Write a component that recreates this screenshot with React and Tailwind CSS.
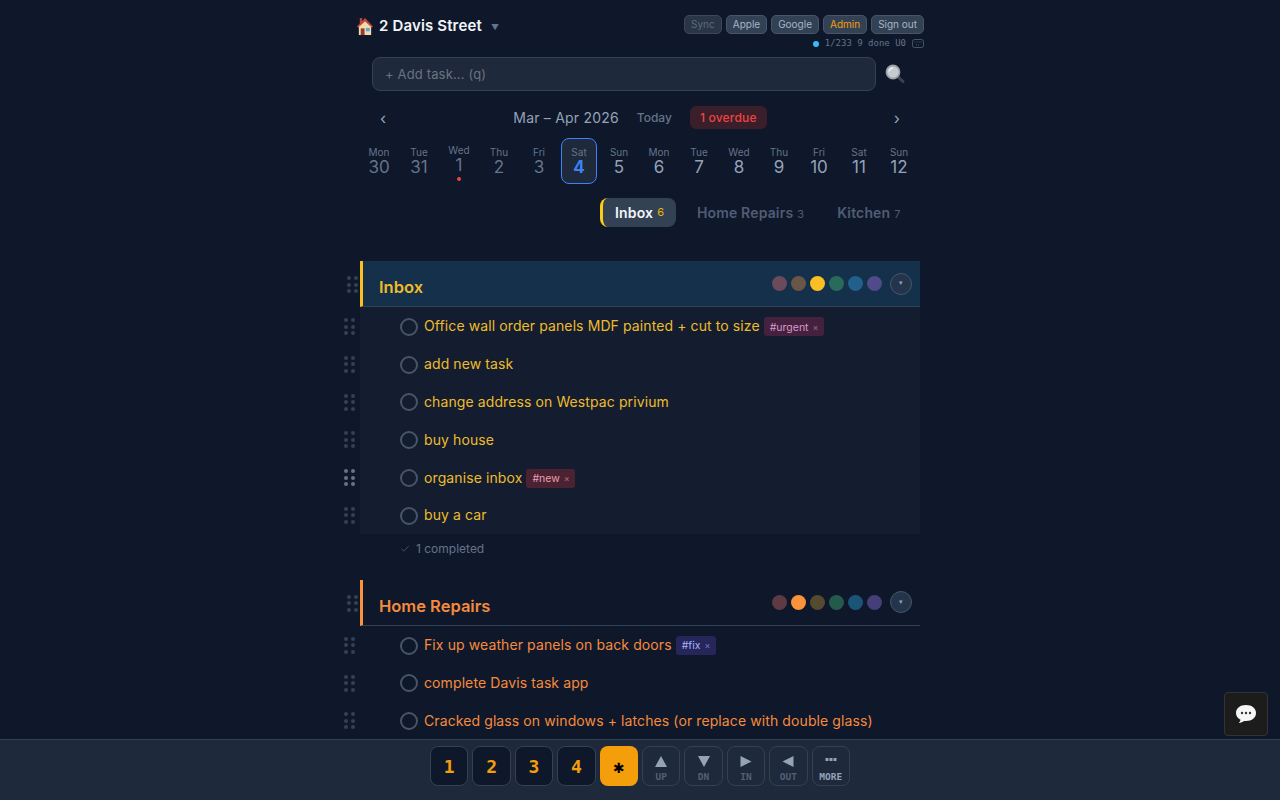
import { Check } from 'lucide-react';

const days = [
  ['Mon', 30, 'past'], ['Tue', 31, 'past'], ['Wed', 1, 'overdue'], ['Thu', 2, 'past'], ['Fri', 3, 'past'],
  ['Sat', 4, 'today'], ['Sun', 5], ['Mon', 6], ['Tue', 7], ['Wed', 8], ['Thu', 9], ['Fri', 10], ['Sat', 11], ['Sun', 12],
];

const tagStyles = {
  urgent: 'bg-[#43213f] text-[#d99bc8]',
  new: 'bg-[#4a2232] text-[#eba0b2]',
  fix: 'bg-[#26265a] text-[#a5b4fc]',
};

function Grip({ bright, className }) {
  return (
    <div className={'grid grid-cols-2 gap-x-[3px] gap-y-[2.5px] ' + className}>
      {[0, 1, 2, 3, 4, 5].map((i) => (
        <span key={i} className={'size-[4px] rounded-full ' + (bright ? 'bg-[#64748b]' : 'bg-[#334155]')} />
      ))}
    </div>
  );
}

function House() {
  return (
    <svg width="18" height="19" viewBox="0 0 19 20" className="shrink-0">
      <rect x="4" y="1" width="2.5" height="6" fill="#b5463a" />
      <rect x="3" y="9" width="13" height="10" fill="#f3d9ac" />
      <path d="M9.5 1 L1 10 L2.6 11.2 L9.5 4.4 L16.4 11.2 L18 10 Z" fill="#c9443a" />
      <path d="M9.5 4.4 L16 10.5 L3 10.5 Z" fill="#f3d9ac" />
      <rect x="5" y="12" width="4" height="7" fill="#8a3f2c" />
      <rect x="10.5" y="11.5" width="4" height="3.5" fill="#5aa7d8" />
    </svg>
  );
}

function Magnifier() {
  return (
    <svg width="20" height="20" viewBox="0 0 20 20">
      <path d="M12 12 L18 17.5" stroke="#3f444b" strokeWidth="3" strokeLinecap="round" />
      <circle cx="8" cy="8" r="6.6" fill="#c6cbd1" stroke="#9a9fa6" strokeWidth="1.6" />
      <path d="M4.2 7.5 A4 4 0 0 1 8 4" stroke="#eef0f2" strokeWidth="1.6" fill="none" />
    </svg>
  );
}

function Task({ text, tag, color, bright }) {
  return (
    <div className="relative flex h-[37.8px] items-center pl-[40px]">
      <Grip bright={bright} className="absolute left-[-16px] top-[11px]" />
      <span className="size-[18px] shrink-0 translate-y-[1px] rounded-full border-2 border-[#475569]" />
      <span className={'ml-[6px] text-[14px] tracking-[0.1px] ' + color}>{text}</span>
      {tag && (
        <span className={'ml-[4px] flex h-[19px] translate-y-[1px] items-center gap-[4px] rounded-[3px] pl-[6px] pr-[5.5px] pt-px text-[10.5px] ' + tagStyles[tag]}>
          #{tag}
          <span className="text-[9px] opacity-60">×</span>
        </span>
      )}
    </div>
  );
}

function Section({ title, swatches, tasks, color, barColor, headerBg, bodyBg }) {
  return (
    <section>
      <div className={'relative flex h-[46px] items-center justify-between border-b border-[#334155] border-l-[3px] pl-[16px] pr-[8px] ' + barColor + ' ' + headerBg}>
        <Grip className="absolute left-[-16px] top-[15px]" />
        <h2 className={'translate-y-[4px] text-[16.5px] font-semibold ' + color}>{title}</h2>
        <div className="flex items-center">
          <div className="flex gap-[4px]">
            {swatches.map((c) => (
              <span key={c} className={'size-[15px] rounded-full ' + c} />
            ))}
          </div>
          <button className="ml-[8px] flex size-[22px] items-center justify-center rounded-full border border-[#475569] bg-[#24344a] text-[7px] text-[#94a3b8]">▾</button>
        </div>
      </div>
      <div className={bodyBg}>
        {tasks.map((t) => (
          <Task key={t.text} {...t} color={color} />
        ))}
      </div>
    </section>
  );
}

const inbox = [
  { text: 'Office wall order panels MDF painted + cut to size', tag: 'urgent' },
  { text: 'add new task' },
  { text: 'change address on Westpac privium' },
  { text: 'buy house' },
  { text: 'organise inbox', tag: 'new', bright: true },
  { text: 'buy a car' },
];

const repairs = [
  { text: 'Fix up weather panels on back doors', tag: 'fix' },
  { text: 'complete Davis task app' },
  { text: 'Cracked glass on windows + latches (or replace with double glass)' },
];

const moves = [
  ['M6 0 L12 11 L0 11 Z', 'UP'],
  ['M0 0 L12 0 L6 11 Z', 'DN'],
  ['M0.5 0 L11.5 5.5 L0.5 11 Z', 'IN'],
  ['M11.5 0 L0.5 5.5 L11.5 11 Z', 'OUT'],
  ['M0.5 2 H3.5 V5 H0.5 Z M4.5 2 H7.5 V5 H4.5 Z M8.5 2 H11.5 V5 H8.5 Z', 'MORE'],
];

export default function App() {
  return (
    <div className="relative flex h-screen flex-col overflow-hidden bg-[#0f172a] [font-family:Inter,sans-serif]">
      <main className="mx-auto min-h-0 w-[600px] flex-1 overflow-hidden px-[16px]">
        <header className="flex justify-between pt-[15px]">
          <div className="flex h-[22px] items-center">
            <House />
            <span className="ml-[5px] text-[15px] font-semibold tracking-[0.15px] text-[#f1f5f9]">2 Davis Street</span>
            <span className="ml-[9px] translate-y-[1px] text-[8px] text-[#64748b]">▼</span>
          </div>
          <div>
            <div className="flex justify-end gap-[4px]">
              {['Sync', 'Apple', 'Google', 'Admin', 'Sign out'].map((b) => (
                <button
                  key={b}
                  className={'h-[19px] rounded-[5px] border px-[6px] text-[10px] ' +
                    (b === 'Sync'
                      ? 'border-[#3a4759] bg-[#2a3648] text-[#5b6a80]'
                      : 'border-[#475569] bg-[#334155] ' + (b === 'Admin' ? 'text-[#f59e0b]' : 'text-[#a8b4c6]'))}
                >
                  {b}
                </button>
              ))}
            </div>
            <div className="mt-[4px] flex h-[11px] items-center justify-end text-[9px] text-[#64748b] [font-family:'DejaVu_Sans_Mono',monospace]">
              <span className="mr-[6px] size-[6px] rounded-full bg-[#38bdf8]" />
              1/233 9 done U0
              <svg width="12" height="9" viewBox="0 0 12 9" className="ml-[6px]">
                <rect x="0.5" y="0.5" width="11" height="8" rx="2" fill="none" stroke="#475569" />
                <path d="M2.5 3 H9.5 M4 6 H8" stroke="#475569" strokeDasharray="1 1" />
              </svg>
            </div>
          </div>
        </header>

        <div className="mt-[8px] flex items-center pl-[16px]">
          <div className="flex h-[34px] w-[504px] items-center rounded-[8px] border border-[#334155] bg-[#1e293b] px-[12px] pt-px text-[13px] tracking-[0.15px] text-[#6b7280]">
            + Add task... (q)
          </div>
          <span className="ml-[9px]"><Magnifier /></span>
        </div>

        <div className="mt-[15px] flex h-[23px] items-center justify-between pl-[24px] pr-[24px] text-[#94a3b8]">
          <span className="text-[16px]">‹</span>
          <div className="flex items-center">
            <span className="text-[14px] tracking-[0.2px]">Mar – Apr 2026</span>
            <span className="ml-[18px] text-[12px] font-medium text-[#64748b]">Today</span>
            <span className="ml-[18px] flex h-[23px] items-center rounded-[6px] bg-[#3a1e2a] px-[10px] text-[12px] font-medium tracking-[0.2px] text-[#ef4444]">1 overdue</span>
          </div>
          <span className="text-[16px]">›</span>
        </div>

        <div className="mt-[9px] ml-[3px] grid w-[560px] grid-cols-14">
          {days.map(([name, num, state]) => (
            <div key={name + num} className="flex h-[46px] justify-center">
              <div
                className={'relative flex w-[36px] flex-col items-center rounded-[8px] border ' +
                  (state === 'today' ? 'border-[#3b82f6] bg-[#1e293b] ' : 'border-transparent ') +
                  (state === 'overdue' ? 'pt-[5px]' : 'pt-[7px]')}
              >
                <span className="text-[10px] leading-[12px] text-[#64748b]">{name}</span>
                <span
                  className={'text-[17px] leading-[18px] ' +
                    (state === 'today' ? 'font-bold text-[#3b82f6]' : state ? 'text-[#64748b]' : 'text-[#94a3b8]')}
                >
                  {num}
                </span>
                {state === 'overdue' && <span className="mt-[3px] size-[4px] rounded-full bg-[#ef4444]" />}
              </div>
            </div>
          ))}
        </div>

        <div className="mt-[14px] flex h-[29px] items-center pl-[244px] text-[14px] font-semibold tracking-[0.15px] text-[#4f5d75]">
          <div className="flex h-[29px] w-[76px] items-center rounded-[8px] border-l-[3px] border-[#facc15] bg-[#334155] pl-[12px] text-[#f1f5f9]">
            Inbox<span className="ml-[4px] text-[11px] font-normal text-[#eab308]">6</span>
          </div>
          <span className="ml-[21px]">Home Repairs<span className="ml-[4px] text-[11px] font-normal">3</span></span>
          <span className="ml-[33px]">Kitchen<span className="ml-[4px] text-[11px] font-normal">7</span></span>
        </div>

        <div className="ml-[4px] mt-[34px] w-[560px]">
          <Section
            title="Inbox"
            color="text-[#edbc2c]"
            barColor="border-l-[#fbbf24]"
            headerBg="bg-[#15304a]"
            bodyBg="bg-[#141c2f]"
            swatches={['bg-[#6b4a5c]', 'bg-[#695648]', 'bg-[#fbbf24]', 'bg-[#2a6a5a]', 'bg-[#20608a]', 'bg-[#504a8a]']}
            tasks={inbox}
          />
          <div className="flex h-[30px] items-center pl-[40px] text-[12px] text-[#64748b]">
            <Check size={10} strokeWidth={1.5} />
            <span className="ml-[6px]">1 completed</span>
          </div>
          <div className="mt-[16px]">
            <Section
              title="Home Repairs"
              color="text-[#f58b3c]"
              barColor="border-l-[#fb923c]"
              headerBg=""
              bodyBg=""
              swatches={['bg-[#5e3a45]', 'bg-[#fb923c]', 'bg-[#544a30]', 'bg-[#245a4c]', 'bg-[#1c5478]', 'bg-[#463e78]']}
              tasks={repairs}
            />
          </div>
        </div>
      </main>

      <footer className="flex h-[61px] shrink-0 justify-center gap-[4px] border-t border-[#334155] bg-[#1e293b] pt-[6px] [font-family:'DejaVu_Sans_Mono',monospace]">
        {['1', '2', '3', '4'].map((n) => (
          <button key={n} className="h-[40px] w-[38.4px] rounded-[8px] border border-[#334155] bg-[#0f172a] text-[18px] font-bold text-[#f59e0b]">{n}</button>
        ))}
        <button className="h-[40px] w-[38.4px] rounded-[8px] bg-[#f59e0b] text-[18px] font-bold text-black">✱</button>
        {moves.map(([d, label]) => (
          <button key={label} className="flex h-[40px] w-[38.4px] flex-col items-center rounded-[8px] border border-[#334155] pt-[9px]">
            <svg width="12" height="11" viewBox="0 0 12 11">
              <path d={d} fill="#94a3b8" />
            </svg>
            <span className={'mt-[4px] text-[9.5px] font-bold leading-[12px] ' + (label === 'MORE' ? 'text-[#94a3b8]' : 'text-[#526077]')}>{label}</span>
          </button>
        ))}
      </footer>

      <button className="absolute bottom-[64px] right-[12px] flex size-[44px] items-center justify-center rounded-[4px] border border-[#333] bg-[#1c1c1c]">
        <svg width="24" height="24" viewBox="0 0 24 24">
          <path d="M12 3 C6 3 2 6.4 2 11 C2 14 3.8 16.4 6.5 17.8 C6.3 19 5.6 20.2 4.8 21 C6.8 20.8 8.8 20 10 19 C10.6 19 11.3 19 12 19 C18 19 22 15.6 22 11 C22 6.4 18 3 12 3 Z" fill="#f5f5f5" />
          <circle cx="8" cy="11" r="1.2" fill="#333" />
          <circle cx="12" cy="11" r="1.2" fill="#333" />
          <circle cx="16" cy="11" r="1.2" fill="#333" />
        </svg>
      </button>
    </div>
  );
}
